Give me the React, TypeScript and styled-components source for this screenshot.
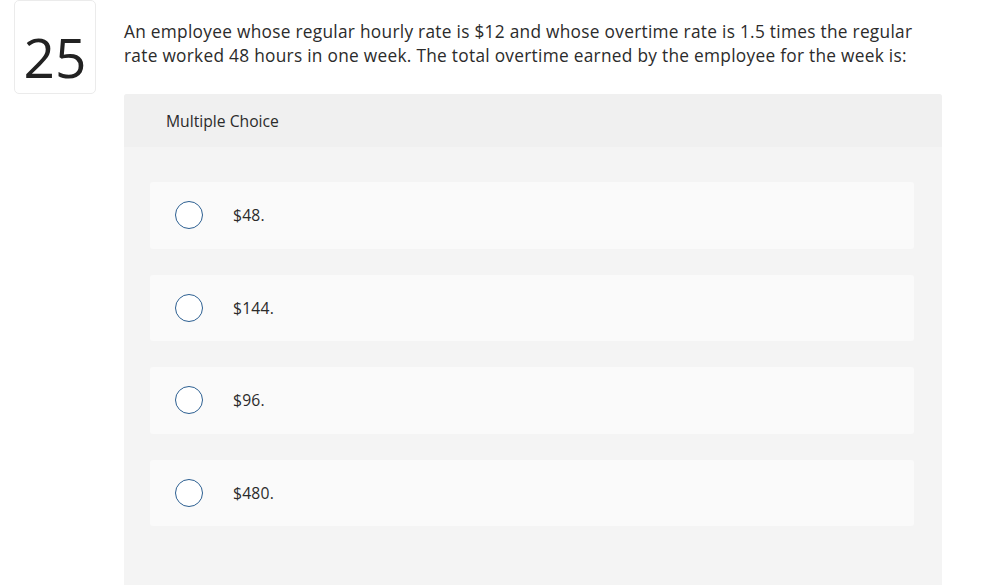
import React from 'react';
import { styled, createGlobalStyle } from 'styled-components';

const GlobalStyle = createGlobalStyle`
  html, body {
    margin: 0;
    padding: 0;
    background: #fff;
    font-family: "Open Sans", Lato, "Liberation Sans", sans-serif;
    color: #2b2b2b;
  }
`;

const Page = styled.div`
  display: flex;
  align-items: flex-start;
  gap: 28px;
  padding-left: 14px;
  height: 585px;
  overflow: hidden;
`;

const NumberBox = styled.div`
  flex-shrink: 0;
  width: 82px;
  height: 94px;
  border: 1px solid #ebebeb;
  border-radius: 5px;
  display: flex;
  align-items: center;
  justify-content: center;
  padding-top: 18px;
  box-sizing: border-box;
  font-size: 55px;
  line-height: 1;
  font-weight: 400;
  color: #222;
`;

const Content = styled.div`
  flex: 0 0 818px;
  display: flex;
  flex-direction: column;
`;

const Question = styled.p`
  margin: 20px 0 26px;
  font-size: 17.3px;
  line-height: 24px;
  letter-spacing: 0.28px;
  color: #2b2b2b;
  max-width: 805px;
`;

const Panel = styled.div`
  background: #f4f4f4;
  border-radius: 3px 3px 0 0;
  min-height: 500px;
`;

const PanelHeader = styled.div`
  height: 53px;
  background: #f0f0f0;
  border-radius: 3px 3px 0 0;
  display: flex;
  align-items: center;
  padding-left: 42px;
  font-size: 15.7px;
  color: #2b2b2b;
`;

const Options = styled.div`
  display: flex;
  flex-direction: column;
  gap: 26px;
  padding: 35px 28px 0 26px;
`;

const Option = styled.label`
  height: 66.5px;
  background: #fafafa;
  border-radius: 3px;
  display: flex;
  align-items: center;
  padding-left: 25px;
  gap: 30px;
  font-size: 15.7px;
  letter-spacing: 0.2px;
  color: #2b2b2b;
  cursor: pointer;
`;

const Radio = styled.span`
  width: 28px;
  height: 28px;
  box-sizing: border-box;
  border: 1.5px solid #2c5f91;
  border-radius: 50%;
  background: #fff;
  flex-shrink: 0;
`;

const choices = ['$48.', '$144.', '$96.', '$480.'];

export default function App() {
  return (
    <>
      <GlobalStyle />
      <Page>
        <NumberBox>25</NumberBox>
        <Content>
          <Question>
            An employee whose regular hourly rate is $12 and whose overtime rate is 1.5 times the regular
            rate worked 48 hours in one week. The total overtime earned by the employee for the week is:
          </Question>
          <Panel>
            <PanelHeader>Multiple Choice</PanelHeader>
            <Options>
              {choices.map(c => (
                <Option key={c}>
                  <Radio />
                  <span>{c}</span>
                </Option>
              ))}
            </Options>
          </Panel>
        </Content>
      </Page>
    </>
  );
}
